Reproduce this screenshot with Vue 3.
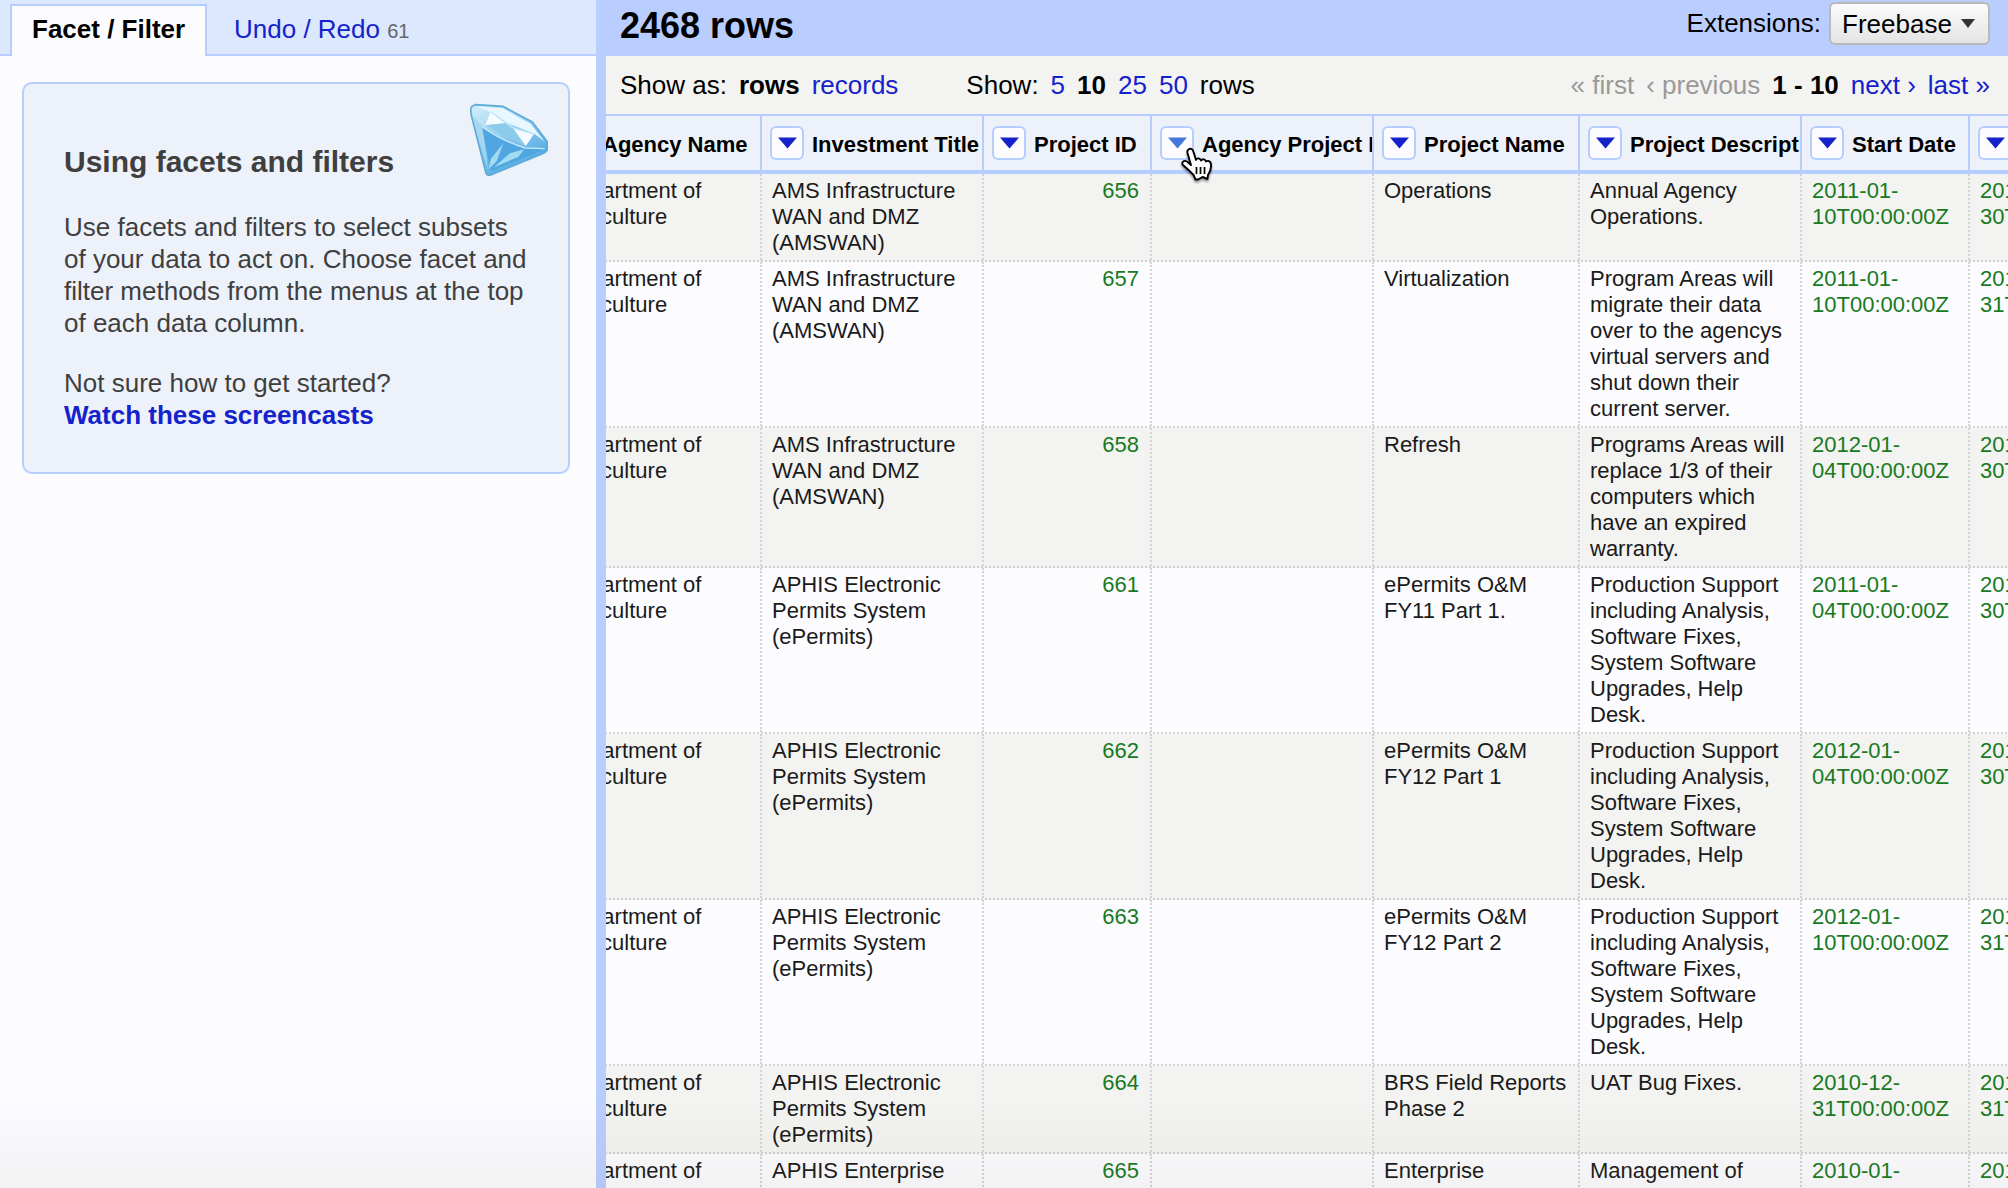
<script setup>
const columns = [
  { name: 'Agency Name', width: 208 },
  { name: 'Investment Title', width: 222 },
  { name: 'Project ID', width: 168 },
  { name: 'Agency Project ID', width: 222, hover: true },
  { name: 'Project Name', width: 206 },
  { name: 'Project Description', width: 222 },
  { name: 'Start Date', width: 168 },
  { name: 'Completion Date', width: 168 },
]

const agency = 'Department of\nAgriculture'
const amswan = 'AMS Infrastructure\nWAN and DMZ\n(AMSWAN)'
const epermits = 'APHIS Electronic\nPermits System\n(ePermits)'
const support =
  'Production Support\nincluding Analysis,\nSoftware Fixes,\nSystem Software\nUpgrades, Help\nDesk.'

const rows = [
  [agency, amswan, '656', '', 'Operations', 'Annual Agency\nOperations.', '2011-01-\n10T00:00:00Z', '2011-09-\n30T00:00:00Z'],
  [agency, amswan, '657', '', 'Virtualization', 'Program Areas will\nmigrate their data\nover to the agencys\nvirtual servers and\nshut down their\ncurrent server.', '2011-01-\n10T00:00:00Z', '2011-12-\n31T00:00:00Z'],
  [agency, amswan, '658', '', 'Refresh', 'Programs Areas will\nreplace 1/3 of their\ncomputers which\nhave an expired\nwarranty.', '2012-01-\n04T00:00:00Z', '2012-09-\n30T00:00:00Z'],
  [agency, epermits, '661', '', 'ePermits O&M\nFY11 Part 1.', support, '2011-01-\n04T00:00:00Z', '2011-09-\n30T00:00:00Z'],
  [agency, epermits, '662', '', 'ePermits O&M\nFY12 Part 1', support, '2012-01-\n04T00:00:00Z', '2012-09-\n30T00:00:00Z'],
  [agency, epermits, '663', '', 'ePermits O&M\nFY12 Part 2', support, '2012-01-\n10T00:00:00Z', '2012-12-\n31T00:00:00Z'],
  [agency, epermits, '664', '', 'BRS Field Reports\nPhase 2', 'UAT Bug Fixes.', '2010-12-\n31T00:00:00Z', '2011-12-\n31T00:00:00Z'],
  [agency, 'APHIS Enterprise\nInfrastructure', '665', '', 'Enterprise\nMessaging', 'Management of\nAPHIS Enterprise IT', '2010-01-\n10T00:00:00Z', '2010-12-\n31T00:00:00Z'],
]

const cellClass = (i) => ({ number: i === 2, date: i >= 6 })
</script>

<template>
  <div class="app">
    <aside class="left">
      <div class="tabs">
        <div class="tab active">Facet / Filter</div>
        <div class="tab">Undo / Redo <span class="count">61</span></div>
      </div>
      <section class="card">
        <svg class="gem" width="78" height="74" viewBox="60 41 234 218">
          <defs>
            <linearGradient id="gemBody" x1="0" y1="0" x2="0.6" y2="1">
              <stop offset="0" stop-color="#d4f0fb" />
              <stop offset="0.5" stop-color="#92cdf0" />
              <stop offset="1" stop-color="#4aa6e0" />
            </linearGradient>
          </defs>
          <path d="M62 58 Q64 47 78 44 L158 49 L247 96 L290 152 Q294 160 291 181 Q286 189 276 192 L124 254 Q111 259 108 250 L64 76 Z" fill="url(#gemBody)" stroke="#5cabd6" stroke-width="5" stroke-linejoin="round" />
          <path d="M80 50 L158 55 L242 101 L283 154 L253 131 L165 96 L122 66 Z" fill="#e9f8fe" />
          <path d="M122 66 L165 100 L105 106 Z" fill="#f4fbff" />
          <path d="M190 116 L252 132 L227 169 Z" fill="#f4fbff" />
          <path d="M165 100 L190 116 L227 169 L105 106 Z" fill="#8ccbea" />
          <path d="M96 112 Q158 156 226 176 L284 178 L128 242 L120 240 Z" fill="#4fa6e0" />
          <path d="M68 74 L96 112 L114 240 Z" fill="#a5d8f0" />
          <path d="M160 160 L122 208 L116 238 L140 214 Z M222 178 L180 190 L132 232 L206 200 Z" fill="#a2dcf4" />
          <path d="M96 110 Q158 154 226 174 L284 176 M68 66 L104 106 M124 66 L190 114 L252 132" fill="none" stroke="#bfe7f7" stroke-width="4" />
        </svg>
        <h1>Using facets and filters</h1>
        <p>Use facets and filters to select subsets<br />of your data to act on. Choose facet and<br />filter methods from the menus at the top<br />of each data column.</p>
        <p>Not sure how to get started?<br /><a class="link strong">Watch these screencasts</a></p>
      </section>
    </aside>

    <main class="right">
      <header class="summary">
        <div class="total">2468 rows</div>
        <div class="extensions">
          <span>Extensions:</span>
          <button class="menu">Freebase
            <svg width="14" height="9" viewBox="0 0 14 9"><path d="M0 0H14L7 9Z" fill="#333" /></svg>
          </button>
        </div>
      </header>

      <nav class="controls">
        <div class="modes">
          <span>Show as:</span><b>rows</b><a class="link">records</a>
        </div>
        <div class="sizes">
          <span>Show:</span><a class="link">5</a><b>10</b><a class="link">25</a><a class="link">50</a><span>rows</span>
        </div>
        <div class="pager">
          <span class="off">« first</span><span class="off">‹ previous</span><b>1 - 10</b><a class="link">next ›</a><a class="link">last »</a>
        </div>
      </nav>

      <div class="viewport">
        <div class="grid">
          <div class="row head">
            <div v-for="c in columns" :key="c.name" class="th" :style="{ width: c.width + 'px' }">
              <span class="drop">
                <svg width="19" height="12" viewBox="0 0 19 12"><path d="M0 0.5H19L9.5 11.5Z" :fill="c.hover ? '#4477dd' : '#1522cc'" /></svg>
              </span>
              <span class="label">{{ c.name }}</span>
            </div>
          </div>
          <div v-for="(r, n) in rows" :key="n" class="row" :class="{ odd: n % 2 === 0 }">
            <div v-for="(t, i) in r" :key="i" class="td" :class="cellClass(i)" :style="{ width: columns[i].width + 'px' }">{{ t }}</div>
          </div>
        </div>
      </div>
    </main>

    <div class="fade"></div>
    <svg class="hand" width="36" height="40" viewBox="0 0 36 40">
      <path d="M8 4 C10 1.5 13 3 13.5 6 L16 14 C17 11.5 20 12 21 14.5 C22.5 12.5 25.5 13 26 15.5 C28.5 14 31 15.5 31 18.5 C31.5 23 30 26 28 29 L27.5 33 L22.5 31 L18 33.5 L15.5 33.5 L13.5 29 C10 25 6 22 2.5 18.5 C1.5 15.5 4.5 14 7 15.5 L11 19 L7.5 7 C7.2 5.5 7.3 4.7 8 4 Z" fill="#fff" stroke="#000" stroke-width="1.9" stroke-linejoin="round" />
      <path d="M16.5 21V28 M20.5 21V28 M24.5 21V28" stroke="#000" stroke-width="1.7" />
    </svg>
  </div>
</template>

<style>
body {
  overflow: hidden;
}
</style>

<style scoped>
.app {
  position: relative;
  display: flex;
  width: 2008px;
  height: 1188px;
  overflow: hidden;
  background: #fcfcff;
  font: 26px/32px "Liberation Sans", Arial, sans-serif;
  color: #000;
}
.left {
  flex: none;
  width: 596px;
  border-right: 10px solid #bacdff;
}
.tabs {
  display: flex;
  box-sizing: border-box;
  height: 56px;
  padding: 4px 0 0 10px;
  background: #dbe8fe;
  border-bottom: 2px solid #b5cdff;
}
.tab {
  box-sizing: border-box;
  height: 50px;
  padding: 9px 26px 0 27px;
  color: #1522cc;
  white-space: nowrap;
}
.tab.active {
  width: 197px;
  height: 52px;
  padding: 7px 0 0 20px;
  border: 2px solid #b5cdff;
  border-bottom: 0;
  background: #fcfcff;
  color: #000;
  font-weight: bold;
}
.count {
  font-size: 20px;
  color: #666;
}
.card {
  position: relative;
  box-sizing: border-box;
  width: 548px;
  height: 392px;
  margin: 26px 0 0 22px;
  padding: 60px 0 0 40px;
  border: 2px solid #b5cdff;
  border-radius: 10px;
  background: #ecf1fa;
  color: #3f3f3f;
}
.gem {
  position: absolute;
  top: 19px;
  right: 20px;
}
h1 {
  margin: 0 0 31px;
  font-size: 30px;
  line-height: 36px;
}
p {
  margin: 0 0 28px;
}
.link {
  color: #1522cc;
}
.strong {
  font-weight: bold;
}
.right {
  flex: 1;
  min-width: 0;
}
.summary {
  display: flex;
  justify-content: space-between;
  box-sizing: border-box;
  height: 56px;
  padding: 2px 18px 0 14px;
  background: #bacdff;
}
.total {
  font-size: 36px;
  font-weight: bold;
  line-height: 48px;
}
.extensions {
  display: flex;
  gap: 8px;
  line-height: 42px;
}
.menu {
  display: flex;
  align-items: center;
  gap: 9px;
  box-sizing: border-box;
  width: 161px;
  height: 43px;
  padding: 0 11px;
  border: 2px solid #b9b9b9;
  border-radius: 6px;
  background: linear-gradient(#fbfbfb, #e4e4e4);
  color: #000;
  font: inherit;
}
.controls {
  display: flex;
  box-sizing: border-box;
  height: 58px;
  padding: 13px 18px 0 14px;
  background: #f3f3f1;
}
.modes,
.sizes,
.pager {
  display: flex;
  gap: 12px;
  white-space: nowrap;
}
.sizes {
  margin-left: 68px;
}
.pager {
  margin-left: auto;
}
.off {
  color: #999;
}
.viewport {
  height: 1074px;
  overflow: hidden;
}
.grid {
  width: 1584px;
  margin-left: -52px;
}
.row {
  display: flex;
  border-bottom: 2px dotted #d2d2d6;
}
.row.head {
  box-sizing: border-box;
  height: 60px;
  border-top: 2px solid #b5cdff;
  border-bottom: 4px solid #b5cdff;
  background: #ecf1fa;
}
.odd {
  background: #f3f3f1;
}
.th,
.td {
  flex: none;
  box-sizing: border-box;
  font-size: 22px;
  line-height: 26px;
}
.th {
  display: flex;
  align-items: center;
  gap: 8px;
  padding-left: 8px;
  border-right: 2px solid #b5cdff;
  overflow: hidden;
  white-space: nowrap;
  font-weight: bold;
}
.th:first-child {
  gap: 6px;
}
.label {
  padding-top: 3px;
}
.drop {
  display: flex;
  flex: none;
  align-items: center;
  justify-content: center;
  box-sizing: border-box;
  width: 34px;
  height: 34px;
  border: 2px solid #b5cdff;
  border-radius: 6px;
  background: #fcfcff;
}
.td {
  padding: 4px 11px 4px 10px;
  border-right: 2px dotted #d2d2d6;
  color: #1a1a1a;
  white-space: pre;
}
.td:first-child {
  padding-left: 8px;
}
.number {
  text-align: right;
}
.number,
.date {
  color: #177a1f;
}
.fade {
  position: absolute;
  left: 0;
  right: 0;
  bottom: 0;
  height: 90px;
  background: linear-gradient(rgba(90, 90, 70, 0), rgba(90, 90, 70, 0.06));
}
.hand {
  position: absolute;
  left: 1180px;
  top: 146px;
  filter: drop-shadow(0 2px 1px rgba(0, 0, 0, 0.4));
}
</style>
